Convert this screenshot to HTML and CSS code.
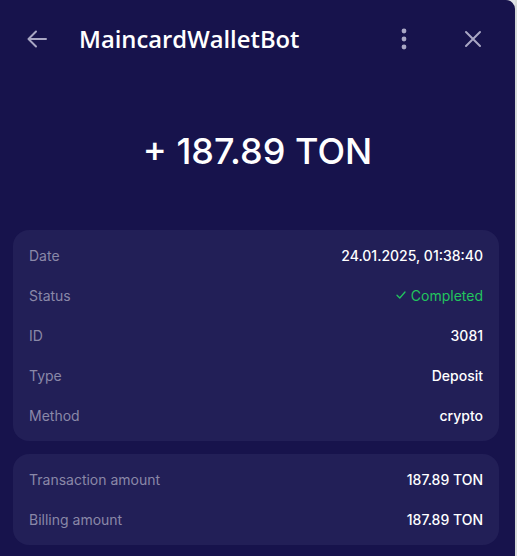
FILE: index.html
```html
<!DOCTYPE html>
<html>
<head>
<meta charset="utf-8">
<link rel="stylesheet" href="styles.css">
</head>
<body>
<div class="page">
  <div class="window">
    <header class="header">
      <button class="icon-btn back" aria-label="Back">
        <svg width="24" height="24" viewBox="0 0 24 24"><path d="M21 12H4M11 4.5L3.5 12L11 19.5" fill="none" stroke="#a9a7c4" stroke-width="2" stroke-linecap="round" stroke-linejoin="round"/></svg>
      </button>
      <div class="title">MaincardWalletBot</div>
      <button class="icon-btn dots" aria-label="Menu">
        <svg width="8" height="22" viewBox="0 0 8 22"><circle cx="4" cy="3" r="2.4" fill="#a9a7c4"/><circle cx="4" cy="11" r="2.4" fill="#a9a7c4"/><circle cx="4" cy="19" r="2.4" fill="#a9a7c4"/></svg>
      </button>
      <button class="icon-btn close" aria-label="Close">
        <svg width="18" height="18" viewBox="0 0 18 18"><path d="M2 2L16 16M16 2L2 16" fill="none" stroke="#a9a7c4" stroke-width="2" stroke-linecap="round"/></svg>
      </button>
    </header>
    <div class="amount">+ 187.89 TON</div>
    <div class="card">
      <div class="row"><span class="label">Date</span><span class="value">24.01.2025, 01:38:40</span></div>
      <div class="row"><span class="label">Status</span><span class="value status"><svg width="10" height="8" viewBox="0 0 10 8"><path d="M1 4.2L3.8 7L9 1" fill="none" stroke="#22c55e" stroke-width="1.3" stroke-linecap="round" stroke-linejoin="round"/></svg>Completed</span></div>
      <div class="row"><span class="label">ID</span><span class="value">3081</span></div>
      <div class="row"><span class="label">Type</span><span class="value">Deposit</span></div>
      <div class="row"><span class="label">Method</span><span class="value">crypto</span></div>
    </div>
    <div class="card">
      <div class="row"><span class="label">Transaction amount</span><span class="value">187.89 TON</span></div>
      <div class="row"><span class="label">Billing amount</span><span class="value">187.89 TON</span></div>
    </div>
  </div>
  <div class="side"></div>
</div>
</body>
</html>
```
FILE: styles.css
```css
* { box-sizing: border-box; }
html, body { margin: 0; padding: 0; }
body {
  width: 517px;
  height: 556px;
  overflow: hidden;
  background: #dfe3e6;
  font-family: Inter, "Noto Sans", sans-serif;
}
.page {
  display: flex;
  height: 556px;
}
.window {
  width: 515px;
  height: 556px;
  background: #17134c;
  border-top-right-radius: 9px;
  display: flex;
  flex-direction: column;
  overflow: hidden;
}
.window > * { flex-shrink: 0; }
.side {
  flex: 1;
  background: #d7dcd9;
}
.header {
  height: 78px;
  display: flex;
  align-items: center;
  padding: 0 0 0 25px;
}
.icon-btn {
  background: none;
  border: 0;
  padding: 0;
  display: flex;
  align-items: center;
  justify-content: center;
}
.back { width: 24px; height: 24px; }
.title {
  margin-left: 30px;
  font-family: "Open Sans", sans-serif;
  font-weight: 600;
  font-size: 23.8px;
  color: #ffffff;
  flex: 1;
}
.dots { width: 8px; height: 22px; margin-right: 56px; }
.close { width: 18px; height: 18px; margin-right: 33px; }
.amount {
  height: 152px;
  display: flex;
  align-items: center;
  justify-content: center;
  color: #ffffff;
  font-size: 36px;
  font-weight: 500;
  padding-bottom: 6px;
}
.card {
  margin: 0 16px 13px 13px;
  background: #221f57;
  border-radius: 16px;
  padding: 5px 16px 6px 16px;
}
.row {
  height: 40px;
  display: flex;
  align-items: center;
  justify-content: space-between;
  font-size: 14px;
}
.label { color: #8a88a8; }
.value { color: #ffffff; font-weight: 500; }
.status {
  color: #22c55e;
  font-weight: 400;
  display: flex;
  align-items: center;
  gap: 5px;
}
```
